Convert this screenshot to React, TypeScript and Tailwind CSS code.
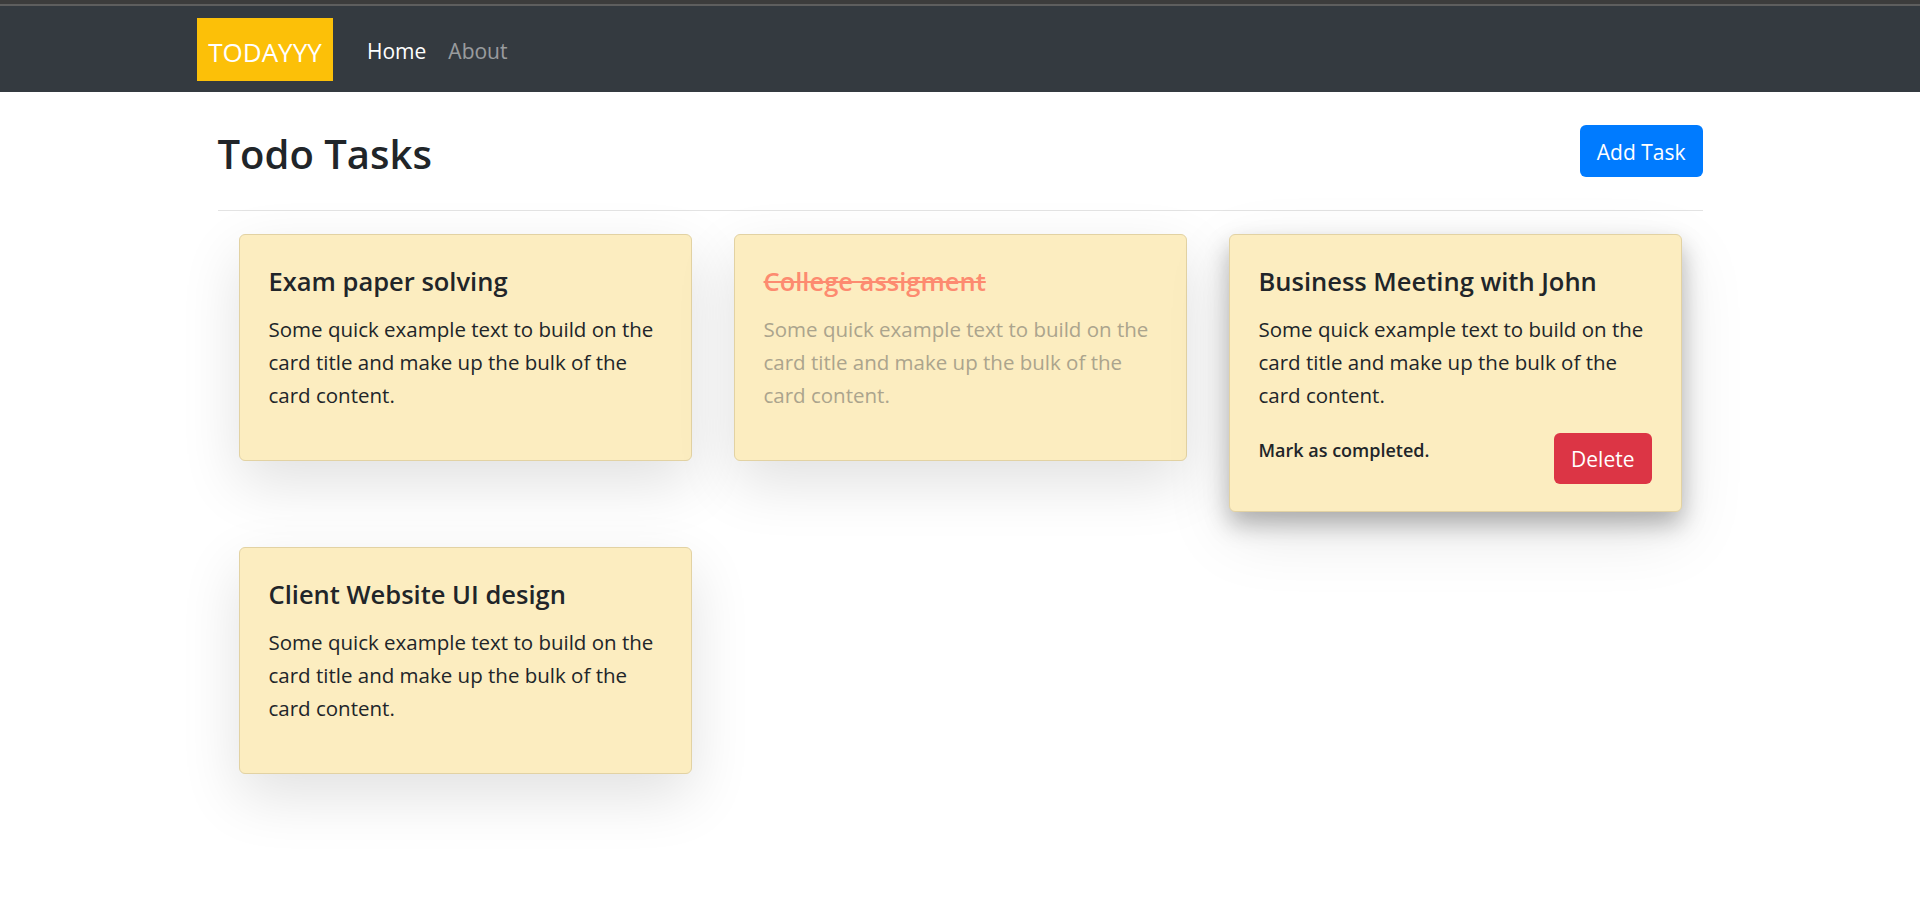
import React from "react";

type CardProps = {
  title: string;
  done?: boolean;
  active?: boolean;
};

const BODY =
  "Some quick example text to build on the card title and make up the bulk of the card content.";

function TaskCard({ title, done, active }: CardProps) {
  return (
    <div
      className={
        "rounded-[6px] border border-[#e2d2a3] bg-[#fcedc0] px-[29px] pt-[29px] pb-[27px] " +
        (active
          ? "shadow-[0_12px_24px_rgba(0,0,0,0.28),0_22px_67px_rgba(0,0,0,0.1)]"
          : "shadow-[0_22px_60px_rgba(0,0,0,0.12)]")
      }
    >
      <h5
        className={
          "mb-[15px] text-[25.5px] font-semibold leading-[34px] " +
          (done ? "text-[#fd8b70] line-through decoration-[#fd8b70]" : "text-[#212529]")
        }
      >
        {title}
      </h5>
      <p
        className={
          "mb-[21px] text-[20.5px] leading-[33px] " + (done ? "text-[#aba48d]" : "text-[#212529]")
        }
      >
        {BODY}
      </p>
      {active && (
        <div className="flex items-start justify-between">
          <span className="text-[18px] font-semibold leading-[35px] text-[#212529]">
            Mark as completed.
          </span>
          <button className="h-[51px] rounded-[6px] bg-[#dc3545] px-[17px] pt-[2px] text-[21px] text-white">
            Delete
          </button>
        </div>
      )}
    </div>
  );
}

export default function App() {
  return (
    <div className="min-h-[908px] bg-white font-['Open_Sans',sans-serif] text-[#212529]">
      <div className="h-[4px] bg-[#3c3c3c]" />
      <div className="h-[2px] bg-[#5e5e5e]" />
      <nav className="h-[86px] bg-[#343a40]">
        <div className="mx-auto flex h-full w-[1526px] items-center">
          <a className="flex h-[63px] w-[136px] items-center justify-center bg-[#fcc008] pt-[6px] text-[26px] text-white">
            TODAYYY
          </a>
          <div className="ml-[23px] mt-[6px] flex text-[21px]">
            <a className="px-[11px] text-white">Home</a>
            <a className="px-[11px] text-white/50">About</a>
          </div>
        </div>
      </nav>
      <main className="mx-auto w-[1485px] pt-[33px]">
        <div className="flex h-[52px] items-center justify-between">
          <h2 className="pt-[5px] text-[40px] font-semibold leading-[50px]">Todo Tasks</h2>
          <button className="h-[52px] rounded-[6px] bg-[#007bff] px-[17px] pt-[4px] text-[21px] text-white">
            Add Task
          </button>
        </div>
        <div className="mt-[33px] h-px bg-[#e3e3e3]" />
        <div className="mt-[23px] grid grid-cols-3 items-start gap-x-[42px] gap-y-[35px] px-[21px]">
          <TaskCard title="Exam paper solving" />
          <TaskCard title="College assigment" done />
          <TaskCard title="Business Meeting with John" active />
          <TaskCard title="Client Website UI design" />
        </div>
      </main>
    </div>
  );
}
